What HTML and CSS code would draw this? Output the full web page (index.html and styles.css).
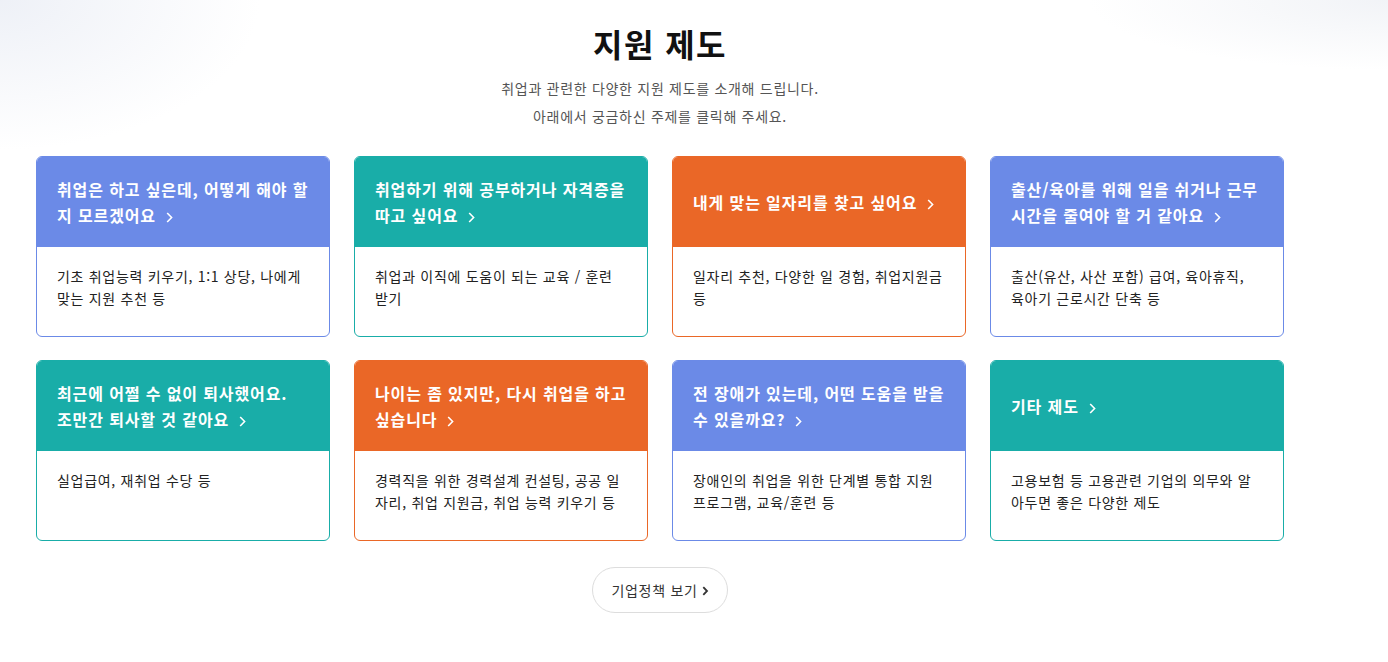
FILE: index.html
```html
<!DOCTYPE html>
<html lang="ko">
<head>
<meta charset="utf-8">
<title>지원 제도</title>
<link rel="stylesheet" href="styles.css">
</head>
<body>
<main class="page">
  <section class="intro">
    <h1 class="title">지원 제도</h1>
    <p class="desc">취업과 관련한 다양한 지원 제도를 소개해 드립니다.<br>아래에서 궁금하신 주제를 클릭해 주세요.</p>
  </section>
  <section class="grid">
    <a class="card blue" href="#">
      <div class="card-head"><span>취업은 하고 싶은데, 어떻게 해야 할 지 모르겠어요<svg class="chev" width="7" height="11" viewBox="0 0 7 11"><polyline points="1.2,1 5.6,5.5 1.2,10" fill="none" stroke="currentColor" stroke-width="1.6"/></svg></span></div>
      <div class="card-body">기초 취업능력 키우기, 1:1 상당, 나에게 맞는 지원 추천 등</div>
    </a>
    <a class="card teal" href="#">
      <div class="card-head"><span>취업하기 위해 공부하거나 자격증을 따고 싶어요<svg class="chev" width="7" height="11" viewBox="0 0 7 11"><polyline points="1.2,1 5.6,5.5 1.2,10" fill="none" stroke="currentColor" stroke-width="1.6"/></svg></span></div>
      <div class="card-body">취업과 이직에 도움이 되는 교육 / 훈련 받기</div>
    </a>
    <a class="card orange" href="#">
      <div class="card-head"><span>내게 맞는 일자리를 찾고 싶어요<svg class="chev" width="7" height="11" viewBox="0 0 7 11"><polyline points="1.2,1 5.6,5.5 1.2,10" fill="none" stroke="currentColor" stroke-width="1.6"/></svg></span></div>
      <div class="card-body">일자리 추천, 다양한 일 경험, 취업지원금 등</div>
    </a>
    <a class="card blue" href="#">
      <div class="card-head"><span>출산/육아를 위해 일을 쉬거나 근무 시간을 줄여야 할 거 같아요<svg class="chev" width="7" height="11" viewBox="0 0 7 11"><polyline points="1.2,1 5.6,5.5 1.2,10" fill="none" stroke="currentColor" stroke-width="1.6"/></svg></span></div>
      <div class="card-body">출산(유산, 사산 포함) 급여, 육아휴직, 육아기 근로시간 단축 등</div>
    </a>
    <a class="card teal" href="#">
      <div class="card-head"><span>최근에 어쩔 수 없이 퇴사했어요. 조만간 퇴사할 것 같아요<svg class="chev" width="7" height="11" viewBox="0 0 7 11"><polyline points="1.2,1 5.6,5.5 1.2,10" fill="none" stroke="currentColor" stroke-width="1.6"/></svg></span></div>
      <div class="card-body">실업급여, 재취업 수당 등</div>
    </a>
    <a class="card orange" href="#">
      <div class="card-head"><span>나이는 좀 있지만, 다시 취업을 하고 싶습니다<svg class="chev" width="7" height="11" viewBox="0 0 7 11"><polyline points="1.2,1 5.6,5.5 1.2,10" fill="none" stroke="currentColor" stroke-width="1.6"/></svg></span></div>
      <div class="card-body">경력직을 위한 경력설계 컨설팅, 공공 일자리, 취업 지원금, 취업 능력 키우기 등</div>
    </a>
    <a class="card blue" href="#">
      <div class="card-head"><span>전 장애가 있는데, 어떤 도움을 받을 수 있을까요?<svg class="chev" width="7" height="11" viewBox="0 0 7 11"><polyline points="1.2,1 5.6,5.5 1.2,10" fill="none" stroke="currentColor" stroke-width="1.6"/></svg></span></div>
      <div class="card-body">장애인의 취업을 위한 단계별 통합 지원 프로그램, 교육/훈련 등</div>
    </a>
    <a class="card teal" href="#">
      <div class="card-head"><span>기타 제도<svg class="chev" width="7" height="11" viewBox="0 0 7 11"><polyline points="1.2,1 5.6,5.5 1.2,10" fill="none" stroke="currentColor" stroke-width="1.6"/></svg></span></div>
      <div class="card-body">고용보험 등 고용관련 기업의 의무와 알아두면 좋은 다양한 제도</div>
    </a>
  </section>
  <div class="more-wrap">
    <a class="more" href="#">기업정책 보기<svg class="more-chev" width="7" height="10" viewBox="0 0 7 10"><polyline points="1.3,1.2 5,5 1.3,8.8" fill="none" stroke="currentColor" stroke-width="1.8"/></svg></a>
  </div>
</main>
</body>
</html>
```

FILE: styles.css
```css
* { box-sizing: border-box; }
html, body { margin: 0; padding: 0; }
body {
  font-family: "Noto Sans CJK KR", "Noto Sans", sans-serif;
  color: #222;
  background:
    radial-gradient(ellipse 260px 150px at 0 0, rgba(236, 239, 246, 0.9), rgba(255,255,255,0) 100%),
    radial-gradient(ellipse 300px 70px at 100% 0, rgba(240, 242, 246, 0.9), rgba(255,255,255,0) 100%),
    #fff;
  min-height: 662px;
}
.page {
  width: 1248px;
  margin-left: 36px;
  padding-top: 18px;
}
.intro { text-align: center; }
.title {
  margin: 0;
  font-size: 32px;
  line-height: 50px;
  font-weight: 700;
  color: #111;
  letter-spacing: 0.045em;
}
.desc {
  margin: 6px 0 0;
  font-size: 14px;
  line-height: 28px;
  color: #555;
  letter-spacing: 0.05em;
}
.grid {
  margin-top: 26px;
  display: grid;
  grid-template-columns: repeat(4, 294px);
  column-gap: 24px;
  row-gap: 23px;
}
.card {
  display: flex;
  flex-direction: column;
  border: 1px solid;
  border-radius: 6px;
  overflow: hidden;
  text-decoration: none;
  color: #222;
  background: #fff;
}
.card.blue { border-color: #6b8ae7; }
.card.teal { border-color: #19ada8; }
.card.orange { border-color: #ea6727; }
.card.blue .card-head { background: #6b8ae7; }
.card.teal .card-head { background: #19ada8; }
.card.orange .card-head { background: #ea6727; }
.card-head {
  display: flex;
  align-items: center;
  margin: -1px -1px 0;
  padding: 1px 20px 0 21px;
  height: 91px;
  color: #fff;
  font-size: 16px;
  font-weight: 700;
  line-height: 26px;
  letter-spacing: 0.055em;
  word-break: keep-all;
}
.chev {
  margin-left: 10px;
  vertical-align: -1px;
}
.card-body {
  height: 89px;
  padding: 18px 22px 0 20px;
  font-size: 14px;
  line-height: 22px;
  color: #222;
  letter-spacing: 0.05em;
  word-break: normal;
}
.more-wrap {
  margin-top: 26px;
  display: flex;
  justify-content: center;
}
.more {
  display: inline-flex;
  align-items: center;
  gap: 4px;
  height: 46px;
  padding: 0 18px;
  border: 1px solid #ddd;
  border-radius: 23px;
  font-size: 14px;
  color: #333;
  text-decoration: none;
  background: #fff;
  letter-spacing: 0.05em;
}
.more-chev { margin-top: 1px; }
```
